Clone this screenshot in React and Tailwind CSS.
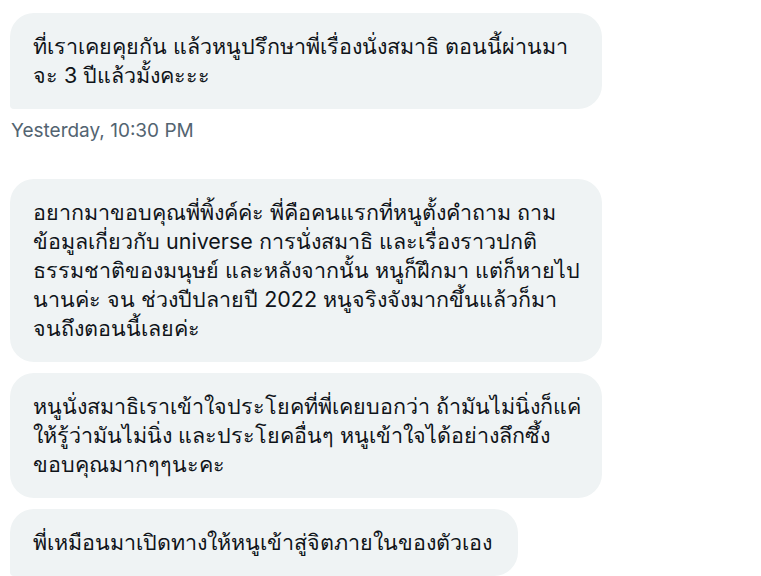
import React from 'react';

const messages = [
  {
    id: 1,
    lines: ['ที่เราเคยคุยกัน แล้วหนูปรึกษาพี่เรื่องนั่งสมาธิ ตอนนี้ผ่านมา', 'จะ 3 ปีแล้วมั้งคะะะ'],
    last: true,
  },
  {
    id: 2,
    lines: [
      'อยากมาขอบคุณพี่พิ้งค์ค่ะ พี่คือคนแรกที่หนูตั้งคำถาม ถาม',
      'ข้อมูลเกี่ยวกับ universe การนั่งสมาธิ และเรื่องราวปกติ',
      'ธรรมชาติของมนุษย์ และหลังจากนั้น หนูก็ฝึกมา แต่ก็หายไป',
      'นานค่ะ จน ช่วงปีปลายปี 2022 หนูจริงจังมากขึ้นแล้วก็มา',
      'จนถึงตอนนี้เลยค่ะ',
    ],
  },
  {
    id: 3,
    lines: [
      'หนูนั่งสมาธิเราเข้าใจประโยคที่พี่เคยบอกว่า ถ้ามันไม่นิ่งก็แค่',
      'ให้รู้ว่ามันไม่นิ่ง และประโยคอื่นๆ หนูเข้าใจได้อย่างลึกซึ้ง',
      'ขอบคุณมากๆๆนะคะ',
    ],
  },
  {
    id: 4,
    lines: ['พี่เหมือนมาเปิดทางให้หนูเข้าสู่จิตภายในของตัวเอง'],
    last: true,
    fit: true,
  },
];

const Bubble = ({ lines, last, fit }) => (
  <div
    className={`bg-[#eff3f4] text-[#0f1419] text-[21.5px] leading-[29px] py-[19px] pl-[23px] pr-[23px] rounded-[24px] whitespace-nowrap ${
      last ? 'rounded-bl-[4px]' : ''
    } ${fit ? 'self-start w-[508px]' : 'w-[592px]'}`}
  >
    {lines.map((line, i) => (
      <div key={i}>{line}</div>
    ))}
  </div>
);

export default function App() {
  return (
    <div className="w-[761px] h-[576px] overflow-hidden bg-white pl-[10px] pt-[13px] font-['Inter','Noto_Sans',sans-serif]">
      <div className="flex flex-col">
        <Bubble {...messages[0]} />
        {/* timestamp under the group */}
        <div className="mt-[11px] mb-[37px] pl-[1px] text-[19px] leading-[22px] text-[#536471]">
          Yesterday, 10:30 PM
        </div>
        <div className="flex flex-col gap-[11px]">
          {messages.slice(1).map((m) => (
            <Bubble key={m.id} {...m} />
          ))}
        </div>
      </div>
    </div>
  );
}
